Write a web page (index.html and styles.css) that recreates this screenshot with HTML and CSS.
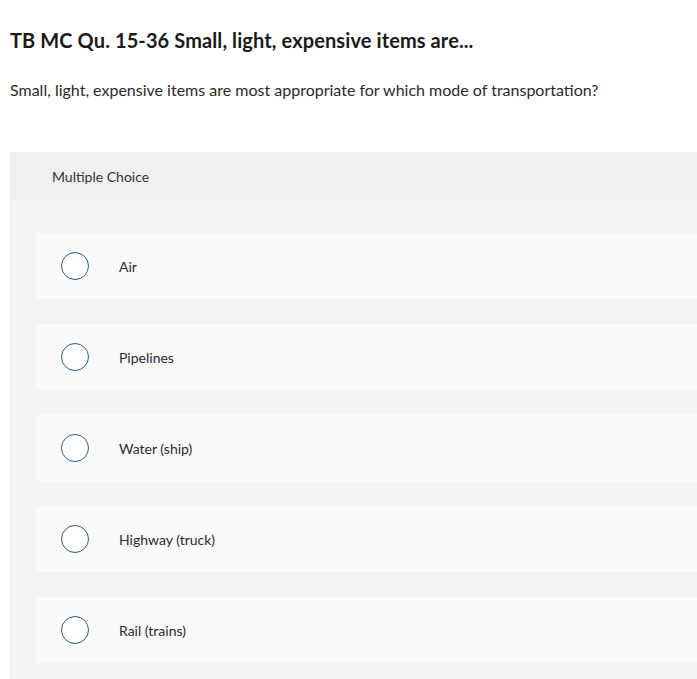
FILE: index.html
```html
<!DOCTYPE html>
<html>
<head>
<meta charset="utf-8">
<link rel="stylesheet" href="styles.css">
</head>
<body>
<div class="page">
  <h1 class="title">TB MC Qu. 15-36 Small, light, expensive items are...</h1>
  <p class="question">Small, light, expensive items are most appropriate for which mode of transportation?</p>
  <section class="panel">
    <div class="panel-head">Multiple Choice</div>
    <div class="panel-body">
      <label class="option"><span class="radio"></span><span class="opt-text">Air</span></label>
      <label class="option"><span class="radio"></span><span class="opt-text">Pipelines</span></label>
      <label class="option"><span class="radio"></span><span class="opt-text">Water (ship)</span></label>
      <label class="option"><span class="radio"></span><span class="opt-text">Highway (truck)</span></label>
      <label class="option"><span class="radio"></span><span class="opt-text">Rail (trains)</span></label>
    </div>
  </section>
</div>
</body>
</html>
```
FILE: styles.css
```css
html, body {
  margin: 0;
  padding: 0;
  background: #ffffff;
  overflow: hidden;
}
body {
  font-family: Lato, "Open Sans", sans-serif;
  color: #1e1e1e;
}
.page {
  padding: 28px 0 0 10px;
}
.title {
  margin: 0;
  font-size: 20px;
  font-weight: 700;
  line-height: 24px;
  letter-spacing: 0.1px;
  color: #1a1a1a;
}
.question {
  margin: 28px 0 0 0;
  font-size: 16px;
  line-height: 20px;
  color: #2a2a2a;
}
.panel {
  margin-top: 52px;
  background: #f4f4f4;
}
.panel-head {
  background: #f0f0f0;
  height: 49px;
  display: flex;
  align-items: center;
  padding-left: 42px;
  font-size: 14px;
  color: #333;
}
.panel-body {
  padding: 32px 0 16px 26px;
  display: flex;
  flex-direction: column;
  gap: 25px;
}
.option {
  background: #fafafa;
  height: 66px;
  display: flex;
  align-items: center;
  padding-left: 25px;
  border-radius: 2px 0 0 2px;
}
.radio {
  box-sizing: border-box;
  width: 28px;
  height: 28px;
  border: 1.5px solid #2d5b8c;
  border-radius: 50%;
  background: #fff;
  flex: none;
}
.opt-text {
  margin-left: 30px;
  font-size: 14px;
  color: #2a2a2a;
}
```
